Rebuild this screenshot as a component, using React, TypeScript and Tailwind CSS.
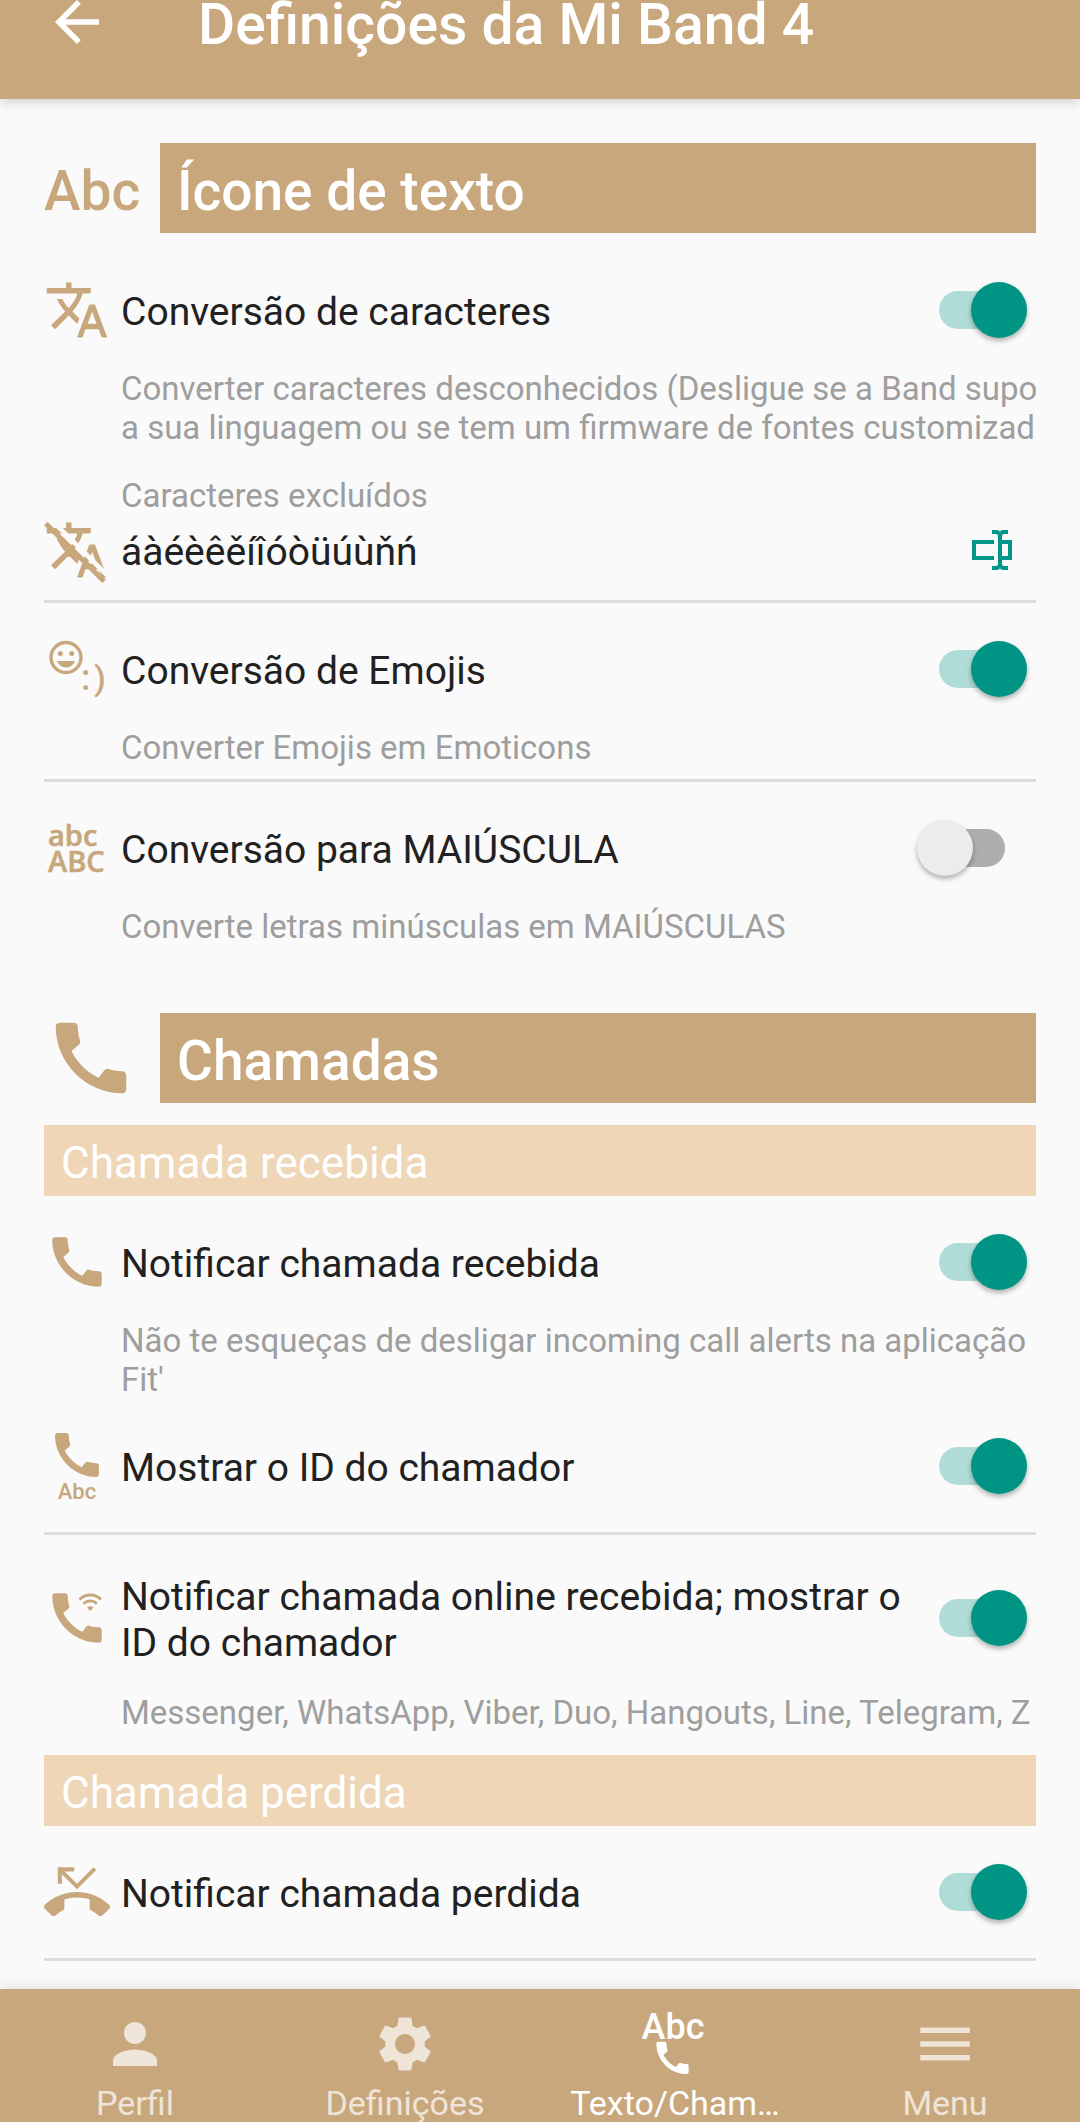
import type { ReactNode } from "react";
import {
  MdArrowBack,
  MdCall,
  MdMenu,
  MdPerson,
  MdPhoneMissed,
  MdSettings,
  MdTranslate,
} from "react-icons/md";

const PHONE =
  "M20.01 15.38c-1.23 0-2.42-.2-3.53-.56-.35-.12-.74-.03-1.01.24l-1.57 1.97c-2.83-1.35-5.48-3.9-6.89-6.83l1.95-1.66c.27-.28.35-.67.24-1.02-.37-1.11-.56-2.3-.56-3.53 0-.54-.45-.99-.99-.99H4.19C3.65 3 3 3.24 3 3.99 3 13.28 10.73 21 20.01 21c.71 0 .99-.63.99-1.18v-3.45c0-.54-.45-.99-.99-.99z";

const TRANSLATE =
  "M12.87 15.07l-2.54-2.51.03-.03A17.52 17.52 0 0014.07 6H17V4h-7V2H8v2H1v1.99h11.17C11.5 7.92 10.44 9.75 9 11.35 8.07 10.32 7.3 9.19 6.69 8h-2c.73 1.63 1.73 3.17 2.98 4.56l-5.09 5.02L4 19l5-5 3.11 3.11.76-2.04zM18.5 10h-2L12 22h2l1.12-3h4.75L21 22h2l-4.5-12zm-2.62 7l1.62-4.33L19.12 17h-3.24z";

function TranslateOffIcon() {
  return (
    <svg viewBox="0 0 24 24" className="size-[66px]" fill="currentColor" aria-hidden="true">
      <mask id="slash-gap">
        <rect width="24" height="24" fill="white" />
        <path d="M2.4 0.8L24.4 22.6" stroke="black" strokeWidth="1.7" />
      </mask>
      <g mask="url(#slash-gap)">
        <path d={TRANSLATE} />
        <path d="M4.7 8H6.7L9.5 11.5L11 14L9 14.5Z" />
      </g>
      <path d="M0 3L1.3 1.7L22.5 22.7L21.2 24Z" />
    </svg>
  );
}

function EmojiIcon() {
  return (
    <svg viewBox="0 0 66 66" className="size-[66px]" fill="currentColor" aria-hidden="true">
      <circle cx="22" cy="21.5" r="15" fill="none" stroke="currentColor" strokeWidth="3.4" />
      <circle cx="16.3" cy="17.5" r="2.5" />
      <circle cx="27.7" cy="17.5" r="2.5" />
      <path d="M13 25h18c-1.6 4-5 6.4-9 6.4s-7.4-2.4-9-6.4z" />
      <text x="37" y="54" fontSize="36" fontWeight="500" fontFamily="Roboto, sans-serif">
        :
      </text>
      <text x="50" y="54" fontSize="34" fontWeight="500" fontFamily="Roboto, sans-serif">
        )
      </text>
    </svg>
  );
}

function CaseIcon() {
  return (
    <svg viewBox="0 0 66 66" className="size-[66px]" fill="currentColor" aria-hidden="true">
      <g fontFamily="Open Sans, sans-serif" fontWeight="600" fontSize="29" stroke="currentColor" strokeWidth="0.6">
        <text x="4" y="31">abc</text>
        <text x="4" y="57">ABC</text>
      </g>
    </svg>
  );
}

function CallerIdIcon() {
  return (
    <svg viewBox="0 0 66 66" className="size-[66px] overflow-visible" fill="currentColor" aria-hidden="true">
      <path d={PHONE} transform="translate(3.7 -7.3) scale(2.44)" />
      <text x="33" y="66" textAnchor="middle" fontSize="22" fontWeight="500" fontFamily="Roboto, sans-serif">
        Abc
      </text>
    </svg>
  );
}

function OnlineCallIcon() {
  return (
    <svg viewBox="0 0 66 66" className="size-[66px]" fill="currentColor" aria-hidden="true">
      <path d={PHONE} transform="scale(2.75)" />
      <g fill="none" stroke="currentColor" strokeWidth="2.8">
        <path d="M35.5 14.5c6-6 15.500-6 21.500 0" />
        <path d="M39.5 18.800c4-3.800 9.500-3.800 13.500 0" />
      </g>
      <path d="M43 22.600c2-1.800 4.500-1.800 6.500 0L46.250 26z" />
    </svg>
  );
}

function TextCallIcon() {
  return (
    <svg viewBox="0 0 66 66" className="size-[66px]" fill="currentColor" aria-hidden="true">
      <text x="31" y="28" textAnchor="middle" fontSize="36" fontWeight="500" fontFamily="Roboto, sans-serif">
        Abc
      </text>
      <path d={PHONE} transform="translate(9 25.5) scale(1.79)" />
    </svg>
  );
}

function RenameIcon() {
  return (
    <svg viewBox="0 0 24 24" className="size-12" fill="currentColor" aria-hidden="true">
      <path d="M17,7H22V17H17V19A1,1 0 0,0 18,20H20V22H17.5C16.95,22 16,21.55 16,21C16,21.55 15.05,22 14.5,22H12V20H14A1,1 0 0,0 15,19V5A1,1 0 0,0 14,4H12V2H14.5C15.05,2 16,2.45 16,3C16,2.45 16.95,2 17.5,2H20V4H18A1,1 0 0,0 17,5V7M2,7H13V9H4V15H13V17H2V7M20,15V9H17V15H20Z" />
    </svg>
  );
}

function SectionHeading({ icon, children }: { icon: ReactNode; children: ReactNode }) {
  return (
    <div className="flex h-[90px] items-center">
      <div className="flex w-[116px] shrink-0 items-center text-[#c8a77d]">{icon}</div>
      <h2 className="flex h-full flex-1 items-center bg-[#c8a77d] pt-1.5 pl-[17px] text-[55px] font-medium text-white">
        {children}
      </h2>
    </div>
  );
}

function SubHeading({ children }: { children: ReactNode }) {
  return (
    <h3 className="mt-[22px] flex h-[71px] items-center bg-[#eed6b7] pt-1 pl-[17px] text-[44px] text-white">
      {children}
    </h3>
  );
}

function Divider() {
  return <hr className="border-0 border-t-[3px] border-[#dcdcdc]" />;
}

function Description({ children }: { children: ReactNode }) {
  return (
    <p className="mt-[15px] overflow-hidden pb-px pl-[77px] text-[33px] leading-[39px] whitespace-pre text-[#9e9e9e]">
      {children}
    </p>
  );
}

function Setting({
  id,
  icon,
  title,
  on = false,
  tall = false,
}: {
  id: string;
  icon: ReactNode;
  title: string;
  on?: boolean;
  tall?: boolean;
}) {
  return (
    <div className={tall ? "mt-[22px] flex min-h-[121px] items-center" : "mt-[22px] flex min-h-[88px] items-center"}>
      <div className="w-[66px] shrink-0 text-[#c8a77d]">{icon}</div>
      <label htmlFor={id} className="ml-[11px] flex-1 pt-1 text-[39px] leading-[46px] text-[#212121]">
        {title}
      </label>
      <input
        id={id}
        type="checkbox"
        role="switch"
        defaultChecked={on}
        className="relative mr-[31px] ml-4 h-14 w-[88px] shrink-0 appearance-none before:absolute before:top-[9px] before:right-0 before:h-[38px] before:w-[78px] before:rounded-full before:bg-[#aeaeae] after:absolute after:top-0 after:left-0 after:size-14 after:rounded-full after:bg-[#ececec] after:shadow-[0_3px_5px_rgba(0,0,0,0.3)] checked:mr-[9px] checked:before:right-auto checked:before:left-0 checked:before:bg-[#b0dcd8] checked:after:right-0 checked:after:left-auto checked:after:bg-[#009485]"
      />
    </div>
  );
}

function Tab({ icon, label, active = false }: { icon: ReactNode; label: string; active?: boolean }) {
  return (
    <a
      href="#"
      aria-current={active ? "page" : undefined}
      className={
        active
          ? "flex min-w-0 flex-1 flex-col items-center gap-2 px-6 text-white"
          : "flex min-w-0 flex-1 flex-col items-center gap-2 px-6 text-[#efe4d8]"
      }
    >
      {icon}
      <span className="max-w-full text-[34px] leading-[37px] whitespace-nowrap">{label}</span>
    </a>
  );
}

export default function App() {
  return (
    <div className="flex min-h-screen flex-col bg-[#fafafa] font-[Roboto,sans-serif]">
      <header className="flex items-start bg-[#c8a77d] pb-[49px] pl-11 text-white shadow-[0_2px_12px_rgba(0,0,0,0.2)]">
        <button type="button" aria-label="Voltar" className="flex h-11 w-[66px] items-center">
          <MdArrowBack className="size-[66px] shrink-0" />
        </button>
        <h1 className="ml-[88px] text-[57px] leading-[50px] font-medium">Definições da Mi Band 4</h1>
      </header>

      <main className="px-11 pt-11">
        <SectionHeading icon={<span className="pt-1.5 text-[55px] font-medium">Abc</span>}>
          Ícone de texto
        </SectionHeading>
        <div className="pt-[11px]">
          <Setting id="chars" icon={<MdTranslate className="size-[66px]" />} title="Conversão de caracteres" on />
        </div>
        <Description>
          {"Converter caracteres desconhecidos (Desligue se a Band suporta\na sua linguagem ou se tem um firmware de fontes customizado"}
        </Description>
        <p className="mt-7 pl-[77px] text-[33px] leading-[39px] text-[#9e9e9e]">Caracteres excluídos</p>
        <div className="mt-0.5 mb-[17px] flex items-center">
          <div className="w-[66px] shrink-0 text-[#c8a77d]">
            <TranslateOffIcon />
          </div>
          <p className="ml-[11px] flex-1 pt-1 text-[39px] leading-[46px] text-[#212121]">áàéèêěíîóòüúùňń</p>
          <button type="button" aria-label="Editar caracteres excluídos" className="mr-5 text-[#009688]">
            <RenameIcon />
          </button>
        </div>
        <Divider />

        <Setting id="emoji" icon={<EmojiIcon />} title="Conversão de Emojis" on />
        <Description>Converter Emojis em Emoticons</Description>
        <div className="pt-[11px]">
          <Divider />
        </div>

        <Setting id="upper" icon={<CaseIcon />} title="Conversão para MAIÚSCULA" />
        <Description>Converte letras minúsculas em MAIÚSCULAS</Description>

        <div className="pt-[66px]">
          <SectionHeading icon={<MdCall className="size-[94px] shrink-0" />}>Chamadas</SectionHeading>
        </div>
        <SubHeading>Chamada recebida</SubHeading>
        <Setting id="incoming" icon={<MdCall className="size-[66px]" />} title="Notificar chamada recebida" on />
        <Description>{"Não te esqueças de desligar incoming call alerts na aplicação\nFit'"}</Description>
        <Setting id="caller-id" icon={<CallerIdIcon />} title="Mostrar o ID do chamador" on />
        <div className="pt-[22px]">
          <Divider />
        </div>
        <Setting
          id="online"
          icon={<OnlineCallIcon />}
          title="Notificar chamada online recebida; mostrar o ID do chamador"
          on
          tall
        />
        <Description>Messenger, WhatsApp, Viber, Duo, Hangouts, Line, Telegram, Z</Description>
        <SubHeading>Chamada perdida</SubHeading>
        <Setting id="missed" icon={<MdPhoneMissed className="size-[66px]" />} title="Notificar chamada perdida" on />
        <div className="pt-[22px]">
          <Divider />
        </div>
      </main>

      <nav className="mt-auto flex bg-[#c8a77d] pt-[22px] shadow-[0_-2px_12px_rgba(0,0,0,0.1)]">
        <Tab icon={<MdPerson className="size-[66px]" />} label="Perfil" />
        <Tab icon={<MdSettings className="size-[66px]" />} label="Definições" />
        <Tab icon={<TextCallIcon />} label="Texto/Cham…" active />
        <Tab icon={<MdMenu className="size-[66px]" />} label="Menu" />
      </nav>
    </div>
  );
}
